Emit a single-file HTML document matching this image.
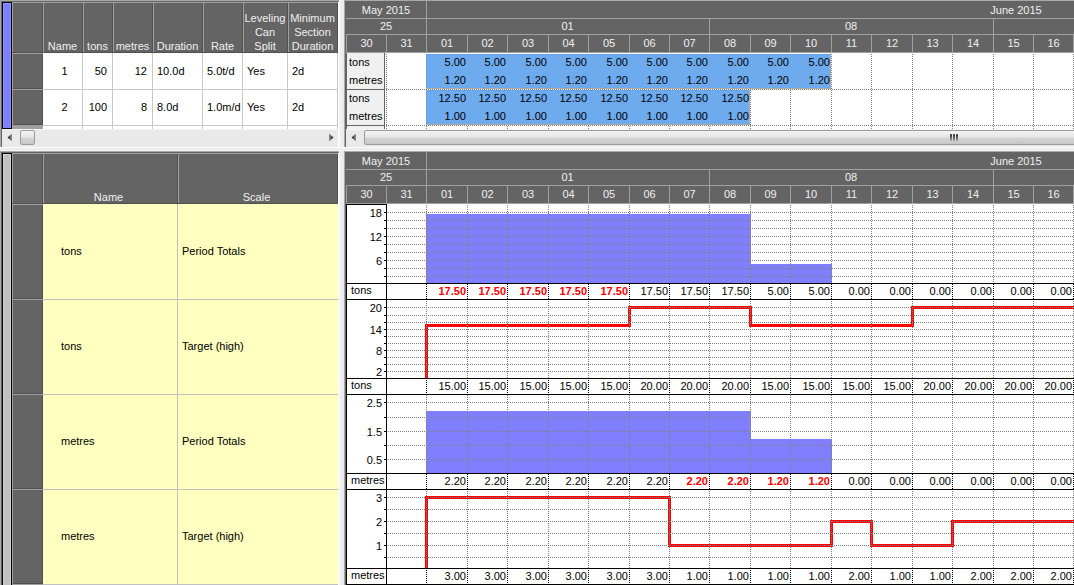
<!DOCTYPE html>
<html><head><meta charset="utf-8"><style>
html,body{margin:0;padding:0;width:1074px;height:585px;overflow:hidden;background:#f0f0f0}
body>div,body>svg{position:absolute}
.t{font-family:"Liberation Sans",sans-serif;font-size:11px;line-height:11px;white-space:nowrap}
</style></head><body>
<div style="left:0px;top:0px;width:1074px;height:585px;background:#f0f0f0;"></div>
<div style="left:0px;top:0px;width:338px;height:147px;background:#a9a9a9;"></div>
<div style="left:1px;top:1px;width:337px;height:146px;background:#646464;"></div>
<div style="left:2px;top:2px;width:336px;height:145px;background:#f0f0f0;"></div>
<div style="left:2px;top:2px;width:10px;height:127px;background:#000;"></div>
<div style="left:3px;top:3px;width:8px;height:125px;background:#8080ff;"></div>
<div style="left:3px;top:3px;width:1px;height:125px;background:#9090ff;"></div>
<div style="left:10px;top:3px;width:1px;height:125px;background:#9090ff;"></div>
<div style="left:3px;top:3px;width:8px;height:1px;background:#9090ff;"></div>
<div style="left:12px;top:2px;width:326px;height:51px;background:#646464;"></div>
<div style="left:12px;top:2px;width:326px;height:1px;background:#a0a0a0;"></div>
<div style="left:12px;top:2px;width:1px;height:127px;background:#a0a0a0;"></div>
<div style="left:42px;top:3px;width:1px;height:49px;background:#505050;"></div>
<div style="left:43px;top:3px;width:1px;height:49px;background:#a0a0a0;"></div>
<div style="left:82px;top:3px;width:1px;height:49px;background:#505050;"></div>
<div style="left:83px;top:3px;width:1px;height:49px;background:#a0a0a0;"></div>
<div style="left:112px;top:3px;width:1px;height:49px;background:#505050;"></div>
<div style="left:113px;top:3px;width:1px;height:49px;background:#a0a0a0;"></div>
<div style="left:152px;top:3px;width:1px;height:49px;background:#505050;"></div>
<div style="left:153px;top:3px;width:1px;height:49px;background:#a0a0a0;"></div>
<div style="left:202px;top:3px;width:1px;height:49px;background:#505050;"></div>
<div style="left:203px;top:3px;width:1px;height:49px;background:#a0a0a0;"></div>
<div style="left:242px;top:3px;width:1px;height:49px;background:#505050;"></div>
<div style="left:243px;top:3px;width:1px;height:49px;background:#a0a0a0;"></div>
<div style="left:287px;top:3px;width:1px;height:49px;background:#505050;"></div>
<div style="left:288px;top:3px;width:1px;height:49px;background:#a0a0a0;"></div>
<div style="left:337px;top:3px;width:1px;height:49px;background:#505050;"></div>
<div style="left:12px;top:52px;width:326px;height:1px;background:#505050;"></div>
<div style="left:13px;top:53px;width:30px;height:76px;background:#646464;"></div>
<div style="left:42px;top:54px;width:1px;height:35px;background:#505050;"></div>
<div style="left:13px;top:88px;width:29px;height:1px;background:#505050;"></div>
<div style="left:12px;top:53px;width:31px;height:1px;background:#a0a0a0;"></div>
<div style="left:12px;top:89px;width:31px;height:1px;background:#a0a0a0;"></div>
<div style="left:42px;top:90px;width:1px;height:35px;background:#505050;"></div>
<div style="left:13px;top:124px;width:29px;height:1px;background:#505050;"></div>
<div style="left:12px;top:89px;width:31px;height:1px;background:#a0a0a0;"></div>
<div style="left:12px;top:125px;width:31px;height:1px;background:#a0a0a0;"></div>
<div style="left:13px;top:126px;width:30px;height:3px;background:#a0a0a0;"></div>
<div style="left:43px;top:53px;width:295px;height:76px;background:#fff;"></div>
<div style="left:82px;top:53px;width:1px;height:76px;background:#c8c8c8;"></div>
<div style="left:112px;top:53px;width:1px;height:76px;background:#c8c8c8;"></div>
<div style="left:152px;top:53px;width:1px;height:76px;background:#c8c8c8;"></div>
<div style="left:202px;top:53px;width:1px;height:76px;background:#c8c8c8;"></div>
<div style="left:242px;top:53px;width:1px;height:76px;background:#c8c8c8;"></div>
<div style="left:287px;top:53px;width:1px;height:76px;background:#c8c8c8;"></div>
<div style="left:337px;top:53px;width:1px;height:76px;background:#c8c8c8;"></div>
<div style="left:43px;top:89px;width:295px;height:1px;background:#c8c8c8;"></div>
<div style="left:43px;top:125px;width:295px;height:1px;background:#c8c8c8;"></div>
<div class="t" style="left:-87.5px;width:300px;text-align:center;top:41px;color:#f0f0f0;">Name</div>
<div class="t" style="left:-52.5px;width:300px;text-align:center;top:41px;color:#f0f0f0;">tons</div>
<div class="t" style="left:-17.5px;width:300px;text-align:center;top:41px;color:#f0f0f0;">metres</div>
<div class="t" style="left:27.5px;width:300px;text-align:center;top:41px;color:#f0f0f0;">Duration</div>
<div class="t" style="left:72.5px;width:300px;text-align:center;top:41px;color:#f0f0f0;">Rate</div>
<div class="t" style="left:115.0px;width:300px;text-align:center;top:13px;color:#f0f0f0;">Leveling</div>
<div class="t" style="left:115.0px;width:300px;text-align:center;top:27px;color:#f0f0f0;">Can</div>
<div class="t" style="left:115.0px;width:300px;text-align:center;top:41px;color:#f0f0f0;">Split</div>
<div class="t" style="left:162.5px;width:300px;text-align:center;top:13px;color:#f0f0f0;">Minimum</div>
<div class="t" style="left:162.5px;width:300px;text-align:center;top:27px;color:#f0f0f0;">Section</div>
<div class="t" style="left:162.5px;width:300px;text-align:center;top:41px;color:#f0f0f0;">Duration</div>
<div class="t" style="left:-85.5px;width:300px;text-align:center;top:66px;color:#000;">1</div>
<div class="t" style="left:-193px;width:300px;text-align:right;top:66px;color:#000;">50</div>
<div class="t" style="left:-153px;width:300px;text-align:right;top:66px;color:#000;">12</div>
<div class="t" style="left:157px;top:66px;color:#000;">10.0d</div>
<div class="t" style="left:207px;top:66px;color:#000;">5.0t/d</div>
<div class="t" style="left:247px;top:66px;color:#000;">Yes</div>
<div class="t" style="left:292px;top:66px;color:#000;">2d</div>
<div class="t" style="left:-85.5px;width:300px;text-align:center;top:102px;color:#000;">2</div>
<div class="t" style="left:-193px;width:300px;text-align:right;top:102px;color:#000;">100</div>
<div class="t" style="left:-153px;width:300px;text-align:right;top:102px;color:#000;">8</div>
<div class="t" style="left:157px;top:102px;color:#000;">8.0d</div>
<div class="t" style="left:207px;top:102px;color:#000;">1.0m/d</div>
<div class="t" style="left:247px;top:102px;color:#000;">Yes</div>
<div class="t" style="left:292px;top:102px;color:#000;">2d</div>
<div style="left:2px;top:129px;width:336px;height:18px;background:#e9e9e9;"></div>
<div style="left:2px;top:129px;width:336px;height:1px;background:#f6f6f6;"></div>
<svg style="position:absolute;left:0;top:0" width="1074" height="585"><defs><linearGradient id="ga" x1="0" x2="1" y1="0" y2="0"><stop offset="0" stop-color="#111"/><stop offset="1" stop-color="#999"/></linearGradient><linearGradient id="gb" x1="1" x2="0" y1="0" y2="0"><stop offset="0" stop-color="#111"/><stop offset="1" stop-color="#999"/></linearGradient></defs><path d="M12 133.5 L12 141.5 L7.5 137.5 Z" fill="url(#ga)"/><path d="M329 133.5 L329 141.5 L333.5 137.5 Z" fill="url(#gb)"/></svg>
<div style="left:20px;top:130px;width:13px;height:13px;border:1px solid #9c9c9c;border-radius:2px;background:linear-gradient(to bottom,#f3f3f3 0,#e6e6e6 45%,#d6d6d6 55%,#c6c6ca 100%)"></div>
<div style="left:338px;top:0px;width:6px;height:585px;background:linear-gradient(to right,#fdfdfd 0 1px,#f6f6f6 1px 2px,#f0f0f0 2px 3px,#ececec 3px 6px);"></div>
<div style="left:0px;top:147px;width:1074px;height:4px;background:linear-gradient(to bottom,#fefefe 0 1px,#ededed 1px 3px,#f5f5f5 3px 4px);"></div>
<div style="left:338px;top:0px;width:1px;height:1px;background:#a9a9a9;"></div>
<div style="left:338px;top:1px;width:1px;height:1px;background:#8a8a8a;"></div>
<div style="left:338px;top:151px;width:1px;height:1px;background:#a9a9a9;"></div>
<div style="left:338px;top:152px;width:1px;height:1px;background:#8a8a8a;"></div>
<div style="left:344px;top:0px;width:730px;height:147px;background:#a9a9a9;"></div>
<div style="left:345px;top:1px;width:729px;height:146px;background:#646464;"></div>
<div style="left:345px;top:1px;width:729px;height:52px;background:#646464;"></div>
<div style="left:346px;top:18px;width:728px;height:1px;background:#a0a0a0;"></div>
<div style="left:426px;top:1px;width:1px;height:17px;background:#a0a0a0;"></div>
<div style="left:346px;top:34px;width:728px;height:1px;background:#a0a0a0;"></div>
<div style="left:426px;top:19px;width:1px;height:15px;background:#a0a0a0;"></div>
<div style="left:709px;top:19px;width:1px;height:15px;background:#a0a0a0;"></div>
<div style="left:993px;top:19px;width:1px;height:15px;background:#a0a0a0;"></div>
<div style="left:346px;top:35px;width:1px;height:17px;background:#a0a0a0;"></div>
<div style="left:386px;top:35px;width:1px;height:17px;background:#a0a0a0;"></div>
<div style="left:426px;top:35px;width:1px;height:17px;background:#a0a0a0;"></div>
<div style="left:467px;top:35px;width:1px;height:17px;background:#a0a0a0;"></div>
<div style="left:507px;top:35px;width:1px;height:17px;background:#a0a0a0;"></div>
<div style="left:548px;top:35px;width:1px;height:17px;background:#a0a0a0;"></div>
<div style="left:588px;top:35px;width:1px;height:17px;background:#a0a0a0;"></div>
<div style="left:629px;top:35px;width:1px;height:17px;background:#a0a0a0;"></div>
<div style="left:669px;top:35px;width:1px;height:17px;background:#a0a0a0;"></div>
<div style="left:709px;top:35px;width:1px;height:17px;background:#a0a0a0;"></div>
<div style="left:750px;top:35px;width:1px;height:17px;background:#a0a0a0;"></div>
<div style="left:790px;top:35px;width:1px;height:17px;background:#a0a0a0;"></div>
<div style="left:831px;top:35px;width:1px;height:17px;background:#a0a0a0;"></div>
<div style="left:871px;top:35px;width:1px;height:17px;background:#a0a0a0;"></div>
<div style="left:912px;top:35px;width:1px;height:17px;background:#a0a0a0;"></div>
<div style="left:952px;top:35px;width:1px;height:17px;background:#a0a0a0;"></div>
<div style="left:993px;top:35px;width:1px;height:17px;background:#a0a0a0;"></div>
<div style="left:1033px;top:35px;width:1px;height:17px;background:#a0a0a0;"></div>
<div style="left:1073px;top:35px;width:1px;height:17px;background:#a0a0a0;"></div>
<div style="left:346px;top:52px;width:728px;height:1px;background:#a0a0a0;"></div>
<div class="t" style="left:236px;width:300px;text-align:center;top:5px;color:#f0f0f0;">May 2015</div>
<div class="t" style="left:866px;width:300px;text-align:center;top:5px;color:#f0f0f0;">June 2015</div>
<div class="t" style="left:236px;width:300px;text-align:center;top:21px;color:#f0f0f0;">25</div>
<div class="t" style="left:417.5px;width:300px;text-align:center;top:21px;color:#f0f0f0;">01</div>
<div class="t" style="left:701px;width:300px;text-align:center;top:21px;color:#f0f0f0;">08</div>
<div class="t" style="left:216.5px;width:300px;text-align:center;top:38px;color:#f0f0f0;">30</div>
<div class="t" style="left:256.5px;width:300px;text-align:center;top:38px;color:#f0f0f0;">31</div>
<div class="t" style="left:297.0px;width:300px;text-align:center;top:38px;color:#f0f0f0;">01</div>
<div class="t" style="left:337.5px;width:300px;text-align:center;top:38px;color:#f0f0f0;">02</div>
<div class="t" style="left:378.0px;width:300px;text-align:center;top:38px;color:#f0f0f0;">03</div>
<div class="t" style="left:418.5px;width:300px;text-align:center;top:38px;color:#f0f0f0;">04</div>
<div class="t" style="left:459.0px;width:300px;text-align:center;top:38px;color:#f0f0f0;">05</div>
<div class="t" style="left:499.5px;width:300px;text-align:center;top:38px;color:#f0f0f0;">06</div>
<div class="t" style="left:539.5px;width:300px;text-align:center;top:38px;color:#f0f0f0;">07</div>
<div class="t" style="left:580.0px;width:300px;text-align:center;top:38px;color:#f0f0f0;">08</div>
<div class="t" style="left:620.5px;width:300px;text-align:center;top:38px;color:#f0f0f0;">09</div>
<div class="t" style="left:661.0px;width:300px;text-align:center;top:38px;color:#f0f0f0;">10</div>
<div class="t" style="left:701.5px;width:300px;text-align:center;top:38px;color:#f0f0f0;">11</div>
<div class="t" style="left:742.0px;width:300px;text-align:center;top:38px;color:#f0f0f0;">12</div>
<div class="t" style="left:782.5px;width:300px;text-align:center;top:38px;color:#f0f0f0;">13</div>
<div class="t" style="left:823.0px;width:300px;text-align:center;top:38px;color:#f0f0f0;">14</div>
<div class="t" style="left:863.5px;width:300px;text-align:center;top:38px;color:#f0f0f0;">15</div>
<div class="t" style="left:903.5px;width:300px;text-align:center;top:38px;color:#f0f0f0;">16</div>
<div style="left:346px;top:53px;width:1px;height:76px;background:#646464;"></div>
<div style="left:347px;top:53px;width:37px;height:76px;background:#f0f0f0;"></div>
<div style="left:384px;top:53px;width:1px;height:76px;background:#646464;"></div>
<div style="left:347px;top:89px;width:37px;height:1px;background:#646464;"></div>
<div style="left:347px;top:125px;width:37px;height:1px;background:#646464;"></div>
<div style="left:385px;top:53px;width:689px;height:76px;background:#fff;"></div>
<div style="left:426px;top:54px;width:405px;height:35px;background:#6eaaee;"></div>
<div style="left:426px;top:90px;width:324px;height:35px;background:#6eaaee;"></div>
<div style="left:426px;top:88px;width:405px;height:1px;background:#b0aaa0;"></div>
<div style="left:830px;top:54px;width:1px;height:35px;background:#b0aaa0;"></div>
<div style="left:426px;top:124px;width:324px;height:1px;background:#b0aaa0;"></div>
<div style="left:749px;top:90px;width:1px;height:35px;background:#b0aaa0;"></div>
<div style="left:426px;top:54px;width:404px;height:1px;background:#62a2ec;"></div>
<div style="left:426px;top:54px;width:1px;height:34px;background:#62a2ec;"></div>
<div style="left:426px;top:90px;width:323px;height:1px;background:#62a2ec;"></div>
<div style="left:426px;top:90px;width:1px;height:34px;background:#62a2ec;"></div>
<div style="left:386px;top:53px;width:1px;height:76px;background:linear-gradient(to bottom,transparent 0 1px,#808080 1px 2px);background-size:1px 2px"></div>
<div style="left:426px;top:125px;width:1px;height:4px;background:linear-gradient(to bottom,transparent 0 1px,#808080 1px 2px);background-size:1px 2px"></div>
<div style="left:467px;top:125px;width:1px;height:4px;background:linear-gradient(to bottom,transparent 0 1px,#808080 1px 2px);background-size:1px 2px"></div>
<div style="left:507px;top:125px;width:1px;height:4px;background:linear-gradient(to bottom,transparent 0 1px,#808080 1px 2px);background-size:1px 2px"></div>
<div style="left:548px;top:125px;width:1px;height:4px;background:linear-gradient(to bottom,transparent 0 1px,#808080 1px 2px);background-size:1px 2px"></div>
<div style="left:588px;top:125px;width:1px;height:4px;background:linear-gradient(to bottom,transparent 0 1px,#808080 1px 2px);background-size:1px 2px"></div>
<div style="left:629px;top:125px;width:1px;height:4px;background:linear-gradient(to bottom,transparent 0 1px,#808080 1px 2px);background-size:1px 2px"></div>
<div style="left:669px;top:125px;width:1px;height:4px;background:linear-gradient(to bottom,transparent 0 1px,#808080 1px 2px);background-size:1px 2px"></div>
<div style="left:709px;top:125px;width:1px;height:4px;background:linear-gradient(to bottom,transparent 0 1px,#808080 1px 2px);background-size:1px 2px"></div>
<div style="left:750px;top:125px;width:1px;height:4px;background:linear-gradient(to bottom,transparent 0 1px,#808080 1px 2px);background-size:1px 2px"></div>
<div style="left:750px;top:90px;width:1px;height:35px;background:linear-gradient(to bottom,#808080 0 1px,transparent 1px 2px);background-size:1px 2px"></div>
<div style="left:790px;top:125px;width:1px;height:4px;background:linear-gradient(to bottom,transparent 0 1px,#808080 1px 2px);background-size:1px 2px"></div>
<div style="left:790px;top:90px;width:1px;height:35px;background:linear-gradient(to bottom,#808080 0 1px,transparent 1px 2px);background-size:1px 2px"></div>
<div style="left:831px;top:53px;width:1px;height:76px;background:linear-gradient(to bottom,transparent 0 1px,#808080 1px 2px);background-size:1px 2px"></div>
<div style="left:871px;top:53px;width:1px;height:76px;background:linear-gradient(to bottom,transparent 0 1px,#808080 1px 2px);background-size:1px 2px"></div>
<div style="left:912px;top:53px;width:1px;height:76px;background:linear-gradient(to bottom,transparent 0 1px,#808080 1px 2px);background-size:1px 2px"></div>
<div style="left:952px;top:53px;width:1px;height:76px;background:linear-gradient(to bottom,transparent 0 1px,#808080 1px 2px);background-size:1px 2px"></div>
<div style="left:993px;top:53px;width:1px;height:76px;background:linear-gradient(to bottom,transparent 0 1px,#808080 1px 2px);background-size:1px 2px"></div>
<div style="left:1033px;top:53px;width:1px;height:76px;background:linear-gradient(to bottom,transparent 0 1px,#808080 1px 2px);background-size:1px 2px"></div>
<div style="left:1073px;top:53px;width:1px;height:76px;background:linear-gradient(to bottom,transparent 0 1px,#808080 1px 2px);background-size:1px 2px"></div>
<div style="left:386px;top:89px;width:688px;height:1px;background:linear-gradient(to right,#808080 0 1px,transparent 1px 2px);background-size:2px 1px"></div>
<div style="left:386px;top:125px;width:688px;height:1px;background:linear-gradient(to right,#808080 0 1px,transparent 1px 2px);background-size:2px 1px"></div>
<div class="t" style="left:349px;top:57px;color:#000;">tons</div>
<div class="t" style="left:349px;top:75px;color:#000;">metres</div>
<div class="t" style="left:349px;top:93px;color:#000;">tons</div>
<div class="t" style="left:349px;top:111px;color:#000;">metres</div>
<div class="t" style="left:166px;width:300px;text-align:right;top:57px;color:#000;">5.00</div>
<div class="t" style="left:166px;width:300px;text-align:right;top:75px;color:#000;">1.20</div>
<div class="t" style="left:206px;width:300px;text-align:right;top:57px;color:#000;">5.00</div>
<div class="t" style="left:206px;width:300px;text-align:right;top:75px;color:#000;">1.20</div>
<div class="t" style="left:247px;width:300px;text-align:right;top:57px;color:#000;">5.00</div>
<div class="t" style="left:247px;width:300px;text-align:right;top:75px;color:#000;">1.20</div>
<div class="t" style="left:287px;width:300px;text-align:right;top:57px;color:#000;">5.00</div>
<div class="t" style="left:287px;width:300px;text-align:right;top:75px;color:#000;">1.20</div>
<div class="t" style="left:328px;width:300px;text-align:right;top:57px;color:#000;">5.00</div>
<div class="t" style="left:328px;width:300px;text-align:right;top:75px;color:#000;">1.20</div>
<div class="t" style="left:368px;width:300px;text-align:right;top:57px;color:#000;">5.00</div>
<div class="t" style="left:368px;width:300px;text-align:right;top:75px;color:#000;">1.20</div>
<div class="t" style="left:408px;width:300px;text-align:right;top:57px;color:#000;">5.00</div>
<div class="t" style="left:408px;width:300px;text-align:right;top:75px;color:#000;">1.20</div>
<div class="t" style="left:449px;width:300px;text-align:right;top:57px;color:#000;">5.00</div>
<div class="t" style="left:449px;width:300px;text-align:right;top:75px;color:#000;">1.20</div>
<div class="t" style="left:489px;width:300px;text-align:right;top:57px;color:#000;">5.00</div>
<div class="t" style="left:489px;width:300px;text-align:right;top:75px;color:#000;">1.20</div>
<div class="t" style="left:530px;width:300px;text-align:right;top:57px;color:#000;">5.00</div>
<div class="t" style="left:530px;width:300px;text-align:right;top:75px;color:#000;">1.20</div>
<div class="t" style="left:166px;width:300px;text-align:right;top:93px;color:#000;">12.50</div>
<div class="t" style="left:166px;width:300px;text-align:right;top:111px;color:#000;">1.00</div>
<div class="t" style="left:206px;width:300px;text-align:right;top:93px;color:#000;">12.50</div>
<div class="t" style="left:206px;width:300px;text-align:right;top:111px;color:#000;">1.00</div>
<div class="t" style="left:247px;width:300px;text-align:right;top:93px;color:#000;">12.50</div>
<div class="t" style="left:247px;width:300px;text-align:right;top:111px;color:#000;">1.00</div>
<div class="t" style="left:287px;width:300px;text-align:right;top:93px;color:#000;">12.50</div>
<div class="t" style="left:287px;width:300px;text-align:right;top:111px;color:#000;">1.00</div>
<div class="t" style="left:328px;width:300px;text-align:right;top:93px;color:#000;">12.50</div>
<div class="t" style="left:328px;width:300px;text-align:right;top:111px;color:#000;">1.00</div>
<div class="t" style="left:368px;width:300px;text-align:right;top:93px;color:#000;">12.50</div>
<div class="t" style="left:368px;width:300px;text-align:right;top:111px;color:#000;">1.00</div>
<div class="t" style="left:408px;width:300px;text-align:right;top:93px;color:#000;">12.50</div>
<div class="t" style="left:408px;width:300px;text-align:right;top:111px;color:#000;">1.00</div>
<div class="t" style="left:449px;width:300px;text-align:right;top:93px;color:#000;">12.50</div>
<div class="t" style="left:449px;width:300px;text-align:right;top:111px;color:#000;">1.00</div>
<div style="left:346px;top:129px;width:728px;height:18px;background:#e9e9e9;"></div>
<div style="left:346px;top:129px;width:728px;height:1px;background:#f6f6f6;"></div>
<svg style="position:absolute;left:0;top:0" width="1074" height="585"><defs><linearGradient id="gc" x1="0" x2="1" y1="0" y2="0"><stop offset="0" stop-color="#111"/><stop offset="1" stop-color="#999"/></linearGradient></defs><path d="M356 133.5 L356 141.5 L351.5 137.5 Z" fill="url(#gc)"/></svg>
<div style="left:364px;top:130px;width:800px;height:13px;border:1px solid #9c9c9c;border-radius:2px;background:linear-gradient(to bottom,#f3f3f3 0,#e6e6e6 45%,#d6d6d6 55%,#c6c6ca 100%)"></div>
<div style="left:950px;top:134px;width:2px;height:7px;background:linear-gradient(to bottom,#222 0,#555 40%,#aaa 100%);border-radius:1px 1px 0 0"></div>
<div style="left:953px;top:134px;width:2px;height:7px;background:linear-gradient(to bottom,#222 0,#555 40%,#aaa 100%);border-radius:1px 1px 0 0"></div>
<div style="left:956px;top:134px;width:2px;height:7px;background:linear-gradient(to bottom,#222 0,#555 40%,#aaa 100%);border-radius:1px 1px 0 0"></div>
<div style="left:0px;top:151px;width:338px;height:434px;background:#a9a9a9;"></div>
<div style="left:1px;top:152px;width:337px;height:433px;background:#646464;"></div>
<div style="left:2px;top:153px;width:10px;height:432px;background:#000;"></div>
<div style="left:3px;top:154px;width:8px;height:431px;background:#c0c0c0;"></div>
<div style="left:3px;top:154px;width:1px;height:431px;background:#d0d0d0;"></div>
<div style="left:10px;top:154px;width:1px;height:431px;background:#d0d0d0;"></div>
<div style="left:3px;top:154px;width:8px;height:1px;background:#d0d0d0;"></div>
<div style="left:12px;top:153px;width:326px;height:51px;background:#646464;"></div>
<div style="left:12px;top:153px;width:326px;height:1px;background:#a0a0a0;"></div>
<div style="left:12px;top:153px;width:1px;height:432px;background:#a0a0a0;"></div>
<div style="left:42px;top:154px;width:1px;height:49px;background:#505050;"></div>
<div style="left:43px;top:154px;width:1px;height:49px;background:#a0a0a0;"></div>
<div style="left:177px;top:154px;width:1px;height:49px;background:#505050;"></div>
<div style="left:178px;top:154px;width:1px;height:49px;background:#a0a0a0;"></div>
<div style="left:337px;top:154px;width:1px;height:49px;background:#505050;"></div>
<div style="left:12px;top:203px;width:326px;height:1px;background:#505050;"></div>
<div class="t" style="left:-41.5px;width:300px;text-align:center;top:192px;color:#f0f0f0;">Name</div>
<div class="t" style="left:106.5px;width:300px;text-align:center;top:192px;color:#f0f0f0;">Scale</div>
<div style="left:13px;top:204px;width:30px;height:381px;background:#646464;"></div>
<div style="left:43px;top:204px;width:295px;height:381px;background:#ffffc0;"></div>
<div style="left:177px;top:204px;width:1px;height:381px;background:#c0c0c0;"></div>
<div style="left:12px;top:204px;width:31px;height:1px;background:#a0a0a0;"></div>
<div style="left:42px;top:205px;width:1px;height:94px;background:#505050;"></div>
<div style="left:13px;top:298px;width:29px;height:1px;background:#505050;"></div>
<div style="left:12px;top:299px;width:31px;height:1px;background:#a0a0a0;"></div>
<div style="left:43px;top:299px;width:295px;height:1px;background:#c0c0c0;"></div>
<div class="t" style="left:61px;top:246px;color:#000;">tons</div>
<div class="t" style="left:182px;top:246px;color:#000;">Period Totals</div>
<div style="left:12px;top:299px;width:31px;height:1px;background:#a0a0a0;"></div>
<div style="left:42px;top:300px;width:1px;height:94px;background:#505050;"></div>
<div style="left:13px;top:393px;width:29px;height:1px;background:#505050;"></div>
<div style="left:12px;top:394px;width:31px;height:1px;background:#a0a0a0;"></div>
<div style="left:43px;top:394px;width:295px;height:1px;background:#c0c0c0;"></div>
<div class="t" style="left:61px;top:341px;color:#000;">tons</div>
<div class="t" style="left:182px;top:341px;color:#000;">Target (high)</div>
<div style="left:12px;top:394px;width:31px;height:1px;background:#a0a0a0;"></div>
<div style="left:42px;top:395px;width:1px;height:94px;background:#505050;"></div>
<div style="left:13px;top:488px;width:29px;height:1px;background:#505050;"></div>
<div style="left:12px;top:489px;width:31px;height:1px;background:#a0a0a0;"></div>
<div style="left:43px;top:489px;width:295px;height:1px;background:#c0c0c0;"></div>
<div class="t" style="left:61px;top:436px;color:#000;">metres</div>
<div class="t" style="left:182px;top:436px;color:#000;">Period Totals</div>
<div style="left:12px;top:489px;width:31px;height:1px;background:#a0a0a0;"></div>
<div style="left:42px;top:490px;width:1px;height:94px;background:#505050;"></div>
<div style="left:13px;top:583px;width:29px;height:1px;background:#505050;"></div>
<div style="left:12px;top:584px;width:31px;height:1px;background:#a0a0a0;"></div>
<div style="left:43px;top:584px;width:295px;height:1px;background:#c0c0c0;"></div>
<div class="t" style="left:61px;top:531px;color:#000;">metres</div>
<div class="t" style="left:182px;top:531px;color:#000;">Target (high)</div>
<div style="left:344px;top:151px;width:730px;height:434px;background:#a9a9a9;"></div>
<div style="left:345px;top:152px;width:729px;height:433px;background:#646464;"></div>
<div style="left:345px;top:152px;width:729px;height:52px;background:#646464;"></div>
<div style="left:346px;top:169px;width:728px;height:1px;background:#a0a0a0;"></div>
<div style="left:426px;top:152px;width:1px;height:17px;background:#a0a0a0;"></div>
<div style="left:346px;top:185px;width:728px;height:1px;background:#a0a0a0;"></div>
<div style="left:426px;top:170px;width:1px;height:15px;background:#a0a0a0;"></div>
<div style="left:709px;top:170px;width:1px;height:15px;background:#a0a0a0;"></div>
<div style="left:993px;top:170px;width:1px;height:15px;background:#a0a0a0;"></div>
<div style="left:346px;top:186px;width:1px;height:17px;background:#a0a0a0;"></div>
<div style="left:386px;top:186px;width:1px;height:17px;background:#a0a0a0;"></div>
<div style="left:426px;top:186px;width:1px;height:17px;background:#a0a0a0;"></div>
<div style="left:467px;top:186px;width:1px;height:17px;background:#a0a0a0;"></div>
<div style="left:507px;top:186px;width:1px;height:17px;background:#a0a0a0;"></div>
<div style="left:548px;top:186px;width:1px;height:17px;background:#a0a0a0;"></div>
<div style="left:588px;top:186px;width:1px;height:17px;background:#a0a0a0;"></div>
<div style="left:629px;top:186px;width:1px;height:17px;background:#a0a0a0;"></div>
<div style="left:669px;top:186px;width:1px;height:17px;background:#a0a0a0;"></div>
<div style="left:709px;top:186px;width:1px;height:17px;background:#a0a0a0;"></div>
<div style="left:750px;top:186px;width:1px;height:17px;background:#a0a0a0;"></div>
<div style="left:790px;top:186px;width:1px;height:17px;background:#a0a0a0;"></div>
<div style="left:831px;top:186px;width:1px;height:17px;background:#a0a0a0;"></div>
<div style="left:871px;top:186px;width:1px;height:17px;background:#a0a0a0;"></div>
<div style="left:912px;top:186px;width:1px;height:17px;background:#a0a0a0;"></div>
<div style="left:952px;top:186px;width:1px;height:17px;background:#a0a0a0;"></div>
<div style="left:993px;top:186px;width:1px;height:17px;background:#a0a0a0;"></div>
<div style="left:1033px;top:186px;width:1px;height:17px;background:#a0a0a0;"></div>
<div style="left:1073px;top:186px;width:1px;height:17px;background:#a0a0a0;"></div>
<div style="left:346px;top:203px;width:728px;height:1px;background:#a0a0a0;"></div>
<div class="t" style="left:236px;width:300px;text-align:center;top:156px;color:#f0f0f0;">May 2015</div>
<div class="t" style="left:866px;width:300px;text-align:center;top:156px;color:#f0f0f0;">June 2015</div>
<div class="t" style="left:236px;width:300px;text-align:center;top:172px;color:#f0f0f0;">25</div>
<div class="t" style="left:417.5px;width:300px;text-align:center;top:172px;color:#f0f0f0;">01</div>
<div class="t" style="left:701px;width:300px;text-align:center;top:172px;color:#f0f0f0;">08</div>
<div class="t" style="left:216.5px;width:300px;text-align:center;top:189px;color:#f0f0f0;">30</div>
<div class="t" style="left:256.5px;width:300px;text-align:center;top:189px;color:#f0f0f0;">31</div>
<div class="t" style="left:297.0px;width:300px;text-align:center;top:189px;color:#f0f0f0;">01</div>
<div class="t" style="left:337.5px;width:300px;text-align:center;top:189px;color:#f0f0f0;">02</div>
<div class="t" style="left:378.0px;width:300px;text-align:center;top:189px;color:#f0f0f0;">03</div>
<div class="t" style="left:418.5px;width:300px;text-align:center;top:189px;color:#f0f0f0;">04</div>
<div class="t" style="left:459.0px;width:300px;text-align:center;top:189px;color:#f0f0f0;">05</div>
<div class="t" style="left:499.5px;width:300px;text-align:center;top:189px;color:#f0f0f0;">06</div>
<div class="t" style="left:539.5px;width:300px;text-align:center;top:189px;color:#f0f0f0;">07</div>
<div class="t" style="left:580.0px;width:300px;text-align:center;top:189px;color:#f0f0f0;">08</div>
<div class="t" style="left:620.5px;width:300px;text-align:center;top:189px;color:#f0f0f0;">09</div>
<div class="t" style="left:661.0px;width:300px;text-align:center;top:189px;color:#f0f0f0;">10</div>
<div class="t" style="left:701.5px;width:300px;text-align:center;top:189px;color:#f0f0f0;">11</div>
<div class="t" style="left:742.0px;width:300px;text-align:center;top:189px;color:#f0f0f0;">12</div>
<div class="t" style="left:782.5px;width:300px;text-align:center;top:189px;color:#f0f0f0;">13</div>
<div class="t" style="left:823.0px;width:300px;text-align:center;top:189px;color:#f0f0f0;">14</div>
<div class="t" style="left:863.5px;width:300px;text-align:center;top:189px;color:#f0f0f0;">15</div>
<div class="t" style="left:903.5px;width:300px;text-align:center;top:189px;color:#f0f0f0;">16</div>
<div style="left:346px;top:204px;width:728px;height:381px;background:#fff;"></div>
<div style="left:426px;top:214px;width:325px;height:69px;background:#7f7fff;"></div>
<div style="left:750px;top:264px;width:82px;height:19px;background:#7f7fff;"></div>
<div style="left:387px;top:212px;width:687px;height:1px;background:linear-gradient(to right,transparent 0 1px,#808080 1px 2px);background-size:2px 1px"></div>
<div style="left:384px;top:212px;width:2px;height:1px;background:#000;"></div>
<div style="left:387px;top:220px;width:687px;height:1px;background:linear-gradient(to right,transparent 0 1px,#808080 1px 2px);background-size:2px 1px"></div>
<div style="left:384px;top:220px;width:2px;height:1px;background:#000;"></div>
<div style="left:387px;top:228px;width:687px;height:1px;background:linear-gradient(to right,transparent 0 1px,#808080 1px 2px);background-size:2px 1px"></div>
<div style="left:384px;top:228px;width:2px;height:1px;background:#000;"></div>
<div style="left:387px;top:236px;width:687px;height:1px;background:linear-gradient(to right,transparent 0 1px,#808080 1px 2px);background-size:2px 1px"></div>
<div style="left:384px;top:236px;width:2px;height:1px;background:#000;"></div>
<div style="left:387px;top:244px;width:687px;height:1px;background:linear-gradient(to right,transparent 0 1px,#808080 1px 2px);background-size:2px 1px"></div>
<div style="left:384px;top:244px;width:2px;height:1px;background:#000;"></div>
<div style="left:387px;top:252px;width:687px;height:1px;background:linear-gradient(to right,transparent 0 1px,#808080 1px 2px);background-size:2px 1px"></div>
<div style="left:384px;top:252px;width:2px;height:1px;background:#000;"></div>
<div style="left:387px;top:260px;width:687px;height:1px;background:linear-gradient(to right,transparent 0 1px,#808080 1px 2px);background-size:2px 1px"></div>
<div style="left:384px;top:260px;width:2px;height:1px;background:#000;"></div>
<div style="left:387px;top:268px;width:687px;height:1px;background:linear-gradient(to right,transparent 0 1px,#808080 1px 2px);background-size:2px 1px"></div>
<div style="left:384px;top:268px;width:2px;height:1px;background:#000;"></div>
<div style="left:387px;top:276px;width:687px;height:1px;background:linear-gradient(to right,transparent 0 1px,#808080 1px 2px);background-size:2px 1px"></div>
<div style="left:384px;top:276px;width:2px;height:1px;background:#000;"></div>
<div style="left:426px;top:205px;width:1px;height:78px;background:linear-gradient(to bottom,#808080 0 1px,transparent 1px 2px);background-size:1px 2px"></div>
<div style="left:467px;top:205px;width:1px;height:78px;background:linear-gradient(to bottom,#808080 0 1px,transparent 1px 2px);background-size:1px 2px"></div>
<div style="left:507px;top:205px;width:1px;height:78px;background:linear-gradient(to bottom,#808080 0 1px,transparent 1px 2px);background-size:1px 2px"></div>
<div style="left:548px;top:205px;width:1px;height:78px;background:linear-gradient(to bottom,#808080 0 1px,transparent 1px 2px);background-size:1px 2px"></div>
<div style="left:588px;top:205px;width:1px;height:78px;background:linear-gradient(to bottom,#808080 0 1px,transparent 1px 2px);background-size:1px 2px"></div>
<div style="left:629px;top:205px;width:1px;height:78px;background:linear-gradient(to bottom,#808080 0 1px,transparent 1px 2px);background-size:1px 2px"></div>
<div style="left:669px;top:205px;width:1px;height:78px;background:linear-gradient(to bottom,#808080 0 1px,transparent 1px 2px);background-size:1px 2px"></div>
<div style="left:709px;top:205px;width:1px;height:78px;background:linear-gradient(to bottom,#808080 0 1px,transparent 1px 2px);background-size:1px 2px"></div>
<div style="left:750px;top:205px;width:1px;height:78px;background:linear-gradient(to bottom,#808080 0 1px,transparent 1px 2px);background-size:1px 2px"></div>
<div style="left:790px;top:205px;width:1px;height:78px;background:linear-gradient(to bottom,#808080 0 1px,transparent 1px 2px);background-size:1px 2px"></div>
<div style="left:831px;top:205px;width:1px;height:78px;background:linear-gradient(to bottom,#808080 0 1px,transparent 1px 2px);background-size:1px 2px"></div>
<div style="left:871px;top:205px;width:1px;height:78px;background:linear-gradient(to bottom,#808080 0 1px,transparent 1px 2px);background-size:1px 2px"></div>
<div style="left:912px;top:205px;width:1px;height:78px;background:linear-gradient(to bottom,#808080 0 1px,transparent 1px 2px);background-size:1px 2px"></div>
<div style="left:952px;top:205px;width:1px;height:78px;background:linear-gradient(to bottom,#808080 0 1px,transparent 1px 2px);background-size:1px 2px"></div>
<div style="left:993px;top:205px;width:1px;height:78px;background:linear-gradient(to bottom,#808080 0 1px,transparent 1px 2px);background-size:1px 2px"></div>
<div style="left:1033px;top:205px;width:1px;height:78px;background:linear-gradient(to bottom,#808080 0 1px,transparent 1px 2px);background-size:1px 2px"></div>
<div style="left:1073px;top:205px;width:1px;height:78px;background:linear-gradient(to bottom,#808080 0 1px,transparent 1px 2px);background-size:1px 2px"></div>
<div class="t" style="left:82px;width:300px;text-align:right;top:208px;color:#000;">18</div>
<div class="t" style="left:82px;width:300px;text-align:right;top:232px;color:#000;">12</div>
<div class="t" style="left:82px;width:300px;text-align:right;top:256px;color:#000;">6</div>
<div style="left:346px;top:204px;width:41px;height:1px;background:#000;"></div>
<div style="left:346px;top:283px;width:728px;height:1px;background:#000;"></div>
<div style="left:346px;top:299px;width:728px;height:1px;background:#000;"></div>
<div style="left:346px;top:204px;width:1px;height:96px;background:#000;"></div>
<div style="left:386px;top:204px;width:1px;height:96px;background:#000;"></div>
<div style="left:426px;top:284px;width:1px;height:15px;background:linear-gradient(to bottom,#000 0 1px,transparent 1px 2px);background-size:1px 2px"></div>
<div style="left:467px;top:284px;width:1px;height:15px;background:linear-gradient(to bottom,#000 0 1px,transparent 1px 2px);background-size:1px 2px"></div>
<div style="left:507px;top:284px;width:1px;height:15px;background:linear-gradient(to bottom,#000 0 1px,transparent 1px 2px);background-size:1px 2px"></div>
<div style="left:548px;top:284px;width:1px;height:15px;background:linear-gradient(to bottom,#000 0 1px,transparent 1px 2px);background-size:1px 2px"></div>
<div style="left:588px;top:284px;width:1px;height:15px;background:linear-gradient(to bottom,#000 0 1px,transparent 1px 2px);background-size:1px 2px"></div>
<div style="left:629px;top:284px;width:1px;height:15px;background:linear-gradient(to bottom,#000 0 1px,transparent 1px 2px);background-size:1px 2px"></div>
<div style="left:669px;top:284px;width:1px;height:15px;background:linear-gradient(to bottom,#000 0 1px,transparent 1px 2px);background-size:1px 2px"></div>
<div style="left:709px;top:284px;width:1px;height:15px;background:linear-gradient(to bottom,#000 0 1px,transparent 1px 2px);background-size:1px 2px"></div>
<div style="left:750px;top:284px;width:1px;height:15px;background:linear-gradient(to bottom,#000 0 1px,transparent 1px 2px);background-size:1px 2px"></div>
<div style="left:790px;top:284px;width:1px;height:15px;background:linear-gradient(to bottom,#000 0 1px,transparent 1px 2px);background-size:1px 2px"></div>
<div style="left:831px;top:284px;width:1px;height:15px;background:linear-gradient(to bottom,#000 0 1px,transparent 1px 2px);background-size:1px 2px"></div>
<div style="left:871px;top:284px;width:1px;height:15px;background:linear-gradient(to bottom,#000 0 1px,transparent 1px 2px);background-size:1px 2px"></div>
<div style="left:912px;top:284px;width:1px;height:15px;background:linear-gradient(to bottom,#000 0 1px,transparent 1px 2px);background-size:1px 2px"></div>
<div style="left:952px;top:284px;width:1px;height:15px;background:linear-gradient(to bottom,#000 0 1px,transparent 1px 2px);background-size:1px 2px"></div>
<div style="left:993px;top:284px;width:1px;height:15px;background:linear-gradient(to bottom,#000 0 1px,transparent 1px 2px);background-size:1px 2px"></div>
<div style="left:1033px;top:284px;width:1px;height:15px;background:linear-gradient(to bottom,#000 0 1px,transparent 1px 2px);background-size:1px 2px"></div>
<div style="left:1073px;top:284px;width:1px;height:15px;background:linear-gradient(to bottom,#000 0 1px,transparent 1px 2px);background-size:1px 2px"></div>
<div class="t" style="left:351px;top:285px;color:#000;">tons</div>
<div class="t" style="left:166px;width:300px;text-align:right;top:286px;color:#ff0000;font-weight:bold;">17.50</div>
<div class="t" style="left:206px;width:300px;text-align:right;top:286px;color:#ff0000;font-weight:bold;">17.50</div>
<div class="t" style="left:247px;width:300px;text-align:right;top:286px;color:#ff0000;font-weight:bold;">17.50</div>
<div class="t" style="left:287px;width:300px;text-align:right;top:286px;color:#ff0000;font-weight:bold;">17.50</div>
<div class="t" style="left:328px;width:300px;text-align:right;top:286px;color:#ff0000;font-weight:bold;">17.50</div>
<div class="t" style="left:368px;width:300px;text-align:right;top:286px;color:#000;">17.50</div>
<div class="t" style="left:408px;width:300px;text-align:right;top:286px;color:#000;">17.50</div>
<div class="t" style="left:449px;width:300px;text-align:right;top:286px;color:#000;">17.50</div>
<div class="t" style="left:489px;width:300px;text-align:right;top:286px;color:#000;">5.00</div>
<div class="t" style="left:530px;width:300px;text-align:right;top:286px;color:#000;">5.00</div>
<div class="t" style="left:570px;width:300px;text-align:right;top:286px;color:#000;">0.00</div>
<div class="t" style="left:611px;width:300px;text-align:right;top:286px;color:#000;">0.00</div>
<div class="t" style="left:651px;width:300px;text-align:right;top:286px;color:#000;">0.00</div>
<div class="t" style="left:692px;width:300px;text-align:right;top:286px;color:#000;">0.00</div>
<div class="t" style="left:732px;width:300px;text-align:right;top:286px;color:#000;">0.00</div>
<div class="t" style="left:772px;width:300px;text-align:right;top:286px;color:#000;">0.00</div>
<div style="left:425px;top:324px;width:206px;height:3px;background:#ff0000;"></div>
<div style="left:425px;top:324px;width:3px;height:54px;background:#ff0000;"></div>
<div style="left:628px;top:306px;width:124px;height:3px;background:#ff0000;"></div>
<div style="left:628px;top:306px;width:3px;height:21px;background:#ff0000;"></div>
<div style="left:749px;top:324px;width:165px;height:3px;background:#ff0000;"></div>
<div style="left:749px;top:306px;width:3px;height:21px;background:#ff0000;"></div>
<div style="left:911px;top:306px;width:163px;height:3px;background:#ff0000;"></div>
<div style="left:911px;top:306px;width:3px;height:21px;background:#ff0000;"></div>
<div style="left:387px;top:307px;width:687px;height:1px;background:linear-gradient(to right,transparent 0 1px,#808080 1px 2px);background-size:2px 1px"></div>
<div style="left:384px;top:307px;width:2px;height:1px;background:#000;"></div>
<div style="left:387px;top:315px;width:687px;height:1px;background:linear-gradient(to right,transparent 0 1px,#808080 1px 2px);background-size:2px 1px"></div>
<div style="left:384px;top:315px;width:2px;height:1px;background:#000;"></div>
<div style="left:387px;top:322px;width:687px;height:1px;background:linear-gradient(to right,transparent 0 1px,#808080 1px 2px);background-size:2px 1px"></div>
<div style="left:384px;top:322px;width:2px;height:1px;background:#000;"></div>
<div style="left:387px;top:329px;width:687px;height:1px;background:linear-gradient(to right,transparent 0 1px,#808080 1px 2px);background-size:2px 1px"></div>
<div style="left:384px;top:329px;width:2px;height:1px;background:#000;"></div>
<div style="left:387px;top:336px;width:687px;height:1px;background:linear-gradient(to right,transparent 0 1px,#808080 1px 2px);background-size:2px 1px"></div>
<div style="left:384px;top:336px;width:2px;height:1px;background:#000;"></div>
<div style="left:387px;top:343px;width:687px;height:1px;background:linear-gradient(to right,transparent 0 1px,#808080 1px 2px);background-size:2px 1px"></div>
<div style="left:384px;top:343px;width:2px;height:1px;background:#000;"></div>
<div style="left:387px;top:350px;width:687px;height:1px;background:linear-gradient(to right,transparent 0 1px,#808080 1px 2px);background-size:2px 1px"></div>
<div style="left:384px;top:350px;width:2px;height:1px;background:#000;"></div>
<div style="left:387px;top:357px;width:687px;height:1px;background:linear-gradient(to right,transparent 0 1px,#808080 1px 2px);background-size:2px 1px"></div>
<div style="left:384px;top:357px;width:2px;height:1px;background:#000;"></div>
<div style="left:387px;top:364px;width:687px;height:1px;background:linear-gradient(to right,transparent 0 1px,#808080 1px 2px);background-size:2px 1px"></div>
<div style="left:384px;top:364px;width:2px;height:1px;background:#000;"></div>
<div style="left:387px;top:371px;width:687px;height:1px;background:linear-gradient(to right,transparent 0 1px,#808080 1px 2px);background-size:2px 1px"></div>
<div style="left:384px;top:371px;width:2px;height:1px;background:#000;"></div>
<div style="left:426px;top:300px;width:1px;height:78px;background:linear-gradient(to bottom,transparent 0 1px,#808080 1px 2px);background-size:1px 2px"></div>
<div style="left:467px;top:300px;width:1px;height:78px;background:linear-gradient(to bottom,transparent 0 1px,#808080 1px 2px);background-size:1px 2px"></div>
<div style="left:507px;top:300px;width:1px;height:78px;background:linear-gradient(to bottom,transparent 0 1px,#808080 1px 2px);background-size:1px 2px"></div>
<div style="left:548px;top:300px;width:1px;height:78px;background:linear-gradient(to bottom,transparent 0 1px,#808080 1px 2px);background-size:1px 2px"></div>
<div style="left:588px;top:300px;width:1px;height:78px;background:linear-gradient(to bottom,transparent 0 1px,#808080 1px 2px);background-size:1px 2px"></div>
<div style="left:629px;top:300px;width:1px;height:78px;background:linear-gradient(to bottom,transparent 0 1px,#808080 1px 2px);background-size:1px 2px"></div>
<div style="left:669px;top:300px;width:1px;height:78px;background:linear-gradient(to bottom,transparent 0 1px,#808080 1px 2px);background-size:1px 2px"></div>
<div style="left:709px;top:300px;width:1px;height:78px;background:linear-gradient(to bottom,transparent 0 1px,#808080 1px 2px);background-size:1px 2px"></div>
<div style="left:750px;top:300px;width:1px;height:78px;background:linear-gradient(to bottom,transparent 0 1px,#808080 1px 2px);background-size:1px 2px"></div>
<div style="left:790px;top:300px;width:1px;height:78px;background:linear-gradient(to bottom,transparent 0 1px,#808080 1px 2px);background-size:1px 2px"></div>
<div style="left:831px;top:300px;width:1px;height:78px;background:linear-gradient(to bottom,transparent 0 1px,#808080 1px 2px);background-size:1px 2px"></div>
<div style="left:871px;top:300px;width:1px;height:78px;background:linear-gradient(to bottom,transparent 0 1px,#808080 1px 2px);background-size:1px 2px"></div>
<div style="left:912px;top:300px;width:1px;height:78px;background:linear-gradient(to bottom,transparent 0 1px,#808080 1px 2px);background-size:1px 2px"></div>
<div style="left:952px;top:300px;width:1px;height:78px;background:linear-gradient(to bottom,transparent 0 1px,#808080 1px 2px);background-size:1px 2px"></div>
<div style="left:993px;top:300px;width:1px;height:78px;background:linear-gradient(to bottom,transparent 0 1px,#808080 1px 2px);background-size:1px 2px"></div>
<div style="left:1033px;top:300px;width:1px;height:78px;background:linear-gradient(to bottom,transparent 0 1px,#808080 1px 2px);background-size:1px 2px"></div>
<div style="left:1073px;top:300px;width:1px;height:78px;background:linear-gradient(to bottom,transparent 0 1px,#808080 1px 2px);background-size:1px 2px"></div>
<div class="t" style="left:82px;width:300px;text-align:right;top:303px;color:#000;">20</div>
<div class="t" style="left:82px;width:300px;text-align:right;top:325px;color:#000;">14</div>
<div class="t" style="left:82px;width:300px;text-align:right;top:346px;color:#000;">8</div>
<div class="t" style="left:82px;width:300px;text-align:right;top:367px;color:#000;">2</div>
<div style="left:346px;top:299px;width:728px;height:1px;background:#000;"></div>
<div style="left:346px;top:378px;width:728px;height:1px;background:#000;"></div>
<div style="left:346px;top:394px;width:728px;height:1px;background:#000;"></div>
<div style="left:346px;top:299px;width:1px;height:96px;background:#000;"></div>
<div style="left:386px;top:299px;width:1px;height:96px;background:#000;"></div>
<div style="left:426px;top:379px;width:1px;height:15px;background:linear-gradient(to bottom,transparent 0 1px,#000 1px 2px);background-size:1px 2px"></div>
<div style="left:467px;top:379px;width:1px;height:15px;background:linear-gradient(to bottom,transparent 0 1px,#000 1px 2px);background-size:1px 2px"></div>
<div style="left:507px;top:379px;width:1px;height:15px;background:linear-gradient(to bottom,transparent 0 1px,#000 1px 2px);background-size:1px 2px"></div>
<div style="left:548px;top:379px;width:1px;height:15px;background:linear-gradient(to bottom,transparent 0 1px,#000 1px 2px);background-size:1px 2px"></div>
<div style="left:588px;top:379px;width:1px;height:15px;background:linear-gradient(to bottom,transparent 0 1px,#000 1px 2px);background-size:1px 2px"></div>
<div style="left:629px;top:379px;width:1px;height:15px;background:linear-gradient(to bottom,transparent 0 1px,#000 1px 2px);background-size:1px 2px"></div>
<div style="left:669px;top:379px;width:1px;height:15px;background:linear-gradient(to bottom,transparent 0 1px,#000 1px 2px);background-size:1px 2px"></div>
<div style="left:709px;top:379px;width:1px;height:15px;background:linear-gradient(to bottom,transparent 0 1px,#000 1px 2px);background-size:1px 2px"></div>
<div style="left:750px;top:379px;width:1px;height:15px;background:linear-gradient(to bottom,transparent 0 1px,#000 1px 2px);background-size:1px 2px"></div>
<div style="left:790px;top:379px;width:1px;height:15px;background:linear-gradient(to bottom,transparent 0 1px,#000 1px 2px);background-size:1px 2px"></div>
<div style="left:831px;top:379px;width:1px;height:15px;background:linear-gradient(to bottom,transparent 0 1px,#000 1px 2px);background-size:1px 2px"></div>
<div style="left:871px;top:379px;width:1px;height:15px;background:linear-gradient(to bottom,transparent 0 1px,#000 1px 2px);background-size:1px 2px"></div>
<div style="left:912px;top:379px;width:1px;height:15px;background:linear-gradient(to bottom,transparent 0 1px,#000 1px 2px);background-size:1px 2px"></div>
<div style="left:952px;top:379px;width:1px;height:15px;background:linear-gradient(to bottom,transparent 0 1px,#000 1px 2px);background-size:1px 2px"></div>
<div style="left:993px;top:379px;width:1px;height:15px;background:linear-gradient(to bottom,transparent 0 1px,#000 1px 2px);background-size:1px 2px"></div>
<div style="left:1033px;top:379px;width:1px;height:15px;background:linear-gradient(to bottom,transparent 0 1px,#000 1px 2px);background-size:1px 2px"></div>
<div style="left:1073px;top:379px;width:1px;height:15px;background:linear-gradient(to bottom,transparent 0 1px,#000 1px 2px);background-size:1px 2px"></div>
<div class="t" style="left:351px;top:380px;color:#000;">tons</div>
<div class="t" style="left:166px;width:300px;text-align:right;top:381px;color:#000;">15.00</div>
<div class="t" style="left:206px;width:300px;text-align:right;top:381px;color:#000;">15.00</div>
<div class="t" style="left:247px;width:300px;text-align:right;top:381px;color:#000;">15.00</div>
<div class="t" style="left:287px;width:300px;text-align:right;top:381px;color:#000;">15.00</div>
<div class="t" style="left:328px;width:300px;text-align:right;top:381px;color:#000;">15.00</div>
<div class="t" style="left:368px;width:300px;text-align:right;top:381px;color:#000;">20.00</div>
<div class="t" style="left:408px;width:300px;text-align:right;top:381px;color:#000;">20.00</div>
<div class="t" style="left:449px;width:300px;text-align:right;top:381px;color:#000;">20.00</div>
<div class="t" style="left:489px;width:300px;text-align:right;top:381px;color:#000;">15.00</div>
<div class="t" style="left:530px;width:300px;text-align:right;top:381px;color:#000;">15.00</div>
<div class="t" style="left:570px;width:300px;text-align:right;top:381px;color:#000;">15.00</div>
<div class="t" style="left:611px;width:300px;text-align:right;top:381px;color:#000;">15.00</div>
<div class="t" style="left:651px;width:300px;text-align:right;top:381px;color:#000;">20.00</div>
<div class="t" style="left:692px;width:300px;text-align:right;top:381px;color:#000;">20.00</div>
<div class="t" style="left:732px;width:300px;text-align:right;top:381px;color:#000;">20.00</div>
<div class="t" style="left:772px;width:300px;text-align:right;top:381px;color:#000;">20.00</div>
<div style="left:426px;top:411px;width:325px;height:62px;background:#7f7fff;"></div>
<div style="left:750px;top:439px;width:82px;height:34px;background:#7f7fff;"></div>
<div style="left:387px;top:402px;width:687px;height:1px;background:linear-gradient(to right,transparent 0 1px,#808080 1px 2px);background-size:2px 1px"></div>
<div style="left:384px;top:402px;width:2px;height:1px;background:#000;"></div>
<div style="left:387px;top:417px;width:687px;height:1px;background:linear-gradient(to right,transparent 0 1px,#808080 1px 2px);background-size:2px 1px"></div>
<div style="left:384px;top:417px;width:2px;height:1px;background:#000;"></div>
<div style="left:387px;top:431px;width:687px;height:1px;background:linear-gradient(to right,transparent 0 1px,#808080 1px 2px);background-size:2px 1px"></div>
<div style="left:384px;top:431px;width:2px;height:1px;background:#000;"></div>
<div style="left:387px;top:445px;width:687px;height:1px;background:linear-gradient(to right,transparent 0 1px,#808080 1px 2px);background-size:2px 1px"></div>
<div style="left:384px;top:445px;width:2px;height:1px;background:#000;"></div>
<div style="left:387px;top:459px;width:687px;height:1px;background:linear-gradient(to right,transparent 0 1px,#808080 1px 2px);background-size:2px 1px"></div>
<div style="left:384px;top:459px;width:2px;height:1px;background:#000;"></div>
<div style="left:426px;top:395px;width:1px;height:78px;background:linear-gradient(to bottom,#808080 0 1px,transparent 1px 2px);background-size:1px 2px"></div>
<div style="left:467px;top:395px;width:1px;height:78px;background:linear-gradient(to bottom,#808080 0 1px,transparent 1px 2px);background-size:1px 2px"></div>
<div style="left:507px;top:395px;width:1px;height:78px;background:linear-gradient(to bottom,#808080 0 1px,transparent 1px 2px);background-size:1px 2px"></div>
<div style="left:548px;top:395px;width:1px;height:78px;background:linear-gradient(to bottom,#808080 0 1px,transparent 1px 2px);background-size:1px 2px"></div>
<div style="left:588px;top:395px;width:1px;height:78px;background:linear-gradient(to bottom,#808080 0 1px,transparent 1px 2px);background-size:1px 2px"></div>
<div style="left:629px;top:395px;width:1px;height:78px;background:linear-gradient(to bottom,#808080 0 1px,transparent 1px 2px);background-size:1px 2px"></div>
<div style="left:669px;top:395px;width:1px;height:78px;background:linear-gradient(to bottom,#808080 0 1px,transparent 1px 2px);background-size:1px 2px"></div>
<div style="left:709px;top:395px;width:1px;height:78px;background:linear-gradient(to bottom,#808080 0 1px,transparent 1px 2px);background-size:1px 2px"></div>
<div style="left:750px;top:395px;width:1px;height:78px;background:linear-gradient(to bottom,#808080 0 1px,transparent 1px 2px);background-size:1px 2px"></div>
<div style="left:790px;top:395px;width:1px;height:78px;background:linear-gradient(to bottom,#808080 0 1px,transparent 1px 2px);background-size:1px 2px"></div>
<div style="left:831px;top:395px;width:1px;height:78px;background:linear-gradient(to bottom,#808080 0 1px,transparent 1px 2px);background-size:1px 2px"></div>
<div style="left:871px;top:395px;width:1px;height:78px;background:linear-gradient(to bottom,#808080 0 1px,transparent 1px 2px);background-size:1px 2px"></div>
<div style="left:912px;top:395px;width:1px;height:78px;background:linear-gradient(to bottom,#808080 0 1px,transparent 1px 2px);background-size:1px 2px"></div>
<div style="left:952px;top:395px;width:1px;height:78px;background:linear-gradient(to bottom,#808080 0 1px,transparent 1px 2px);background-size:1px 2px"></div>
<div style="left:993px;top:395px;width:1px;height:78px;background:linear-gradient(to bottom,#808080 0 1px,transparent 1px 2px);background-size:1px 2px"></div>
<div style="left:1033px;top:395px;width:1px;height:78px;background:linear-gradient(to bottom,#808080 0 1px,transparent 1px 2px);background-size:1px 2px"></div>
<div style="left:1073px;top:395px;width:1px;height:78px;background:linear-gradient(to bottom,#808080 0 1px,transparent 1px 2px);background-size:1px 2px"></div>
<div class="t" style="left:82px;width:300px;text-align:right;top:398px;color:#000;">2.5</div>
<div class="t" style="left:82px;width:300px;text-align:right;top:427px;color:#000;">1.5</div>
<div class="t" style="left:82px;width:300px;text-align:right;top:455px;color:#000;">0.5</div>
<div style="left:346px;top:394px;width:728px;height:1px;background:#000;"></div>
<div style="left:346px;top:473px;width:728px;height:1px;background:#000;"></div>
<div style="left:346px;top:489px;width:728px;height:1px;background:#000;"></div>
<div style="left:346px;top:394px;width:1px;height:96px;background:#000;"></div>
<div style="left:386px;top:394px;width:1px;height:96px;background:#000;"></div>
<div style="left:426px;top:474px;width:1px;height:15px;background:linear-gradient(to bottom,#000 0 1px,transparent 1px 2px);background-size:1px 2px"></div>
<div style="left:467px;top:474px;width:1px;height:15px;background:linear-gradient(to bottom,#000 0 1px,transparent 1px 2px);background-size:1px 2px"></div>
<div style="left:507px;top:474px;width:1px;height:15px;background:linear-gradient(to bottom,#000 0 1px,transparent 1px 2px);background-size:1px 2px"></div>
<div style="left:548px;top:474px;width:1px;height:15px;background:linear-gradient(to bottom,#000 0 1px,transparent 1px 2px);background-size:1px 2px"></div>
<div style="left:588px;top:474px;width:1px;height:15px;background:linear-gradient(to bottom,#000 0 1px,transparent 1px 2px);background-size:1px 2px"></div>
<div style="left:629px;top:474px;width:1px;height:15px;background:linear-gradient(to bottom,#000 0 1px,transparent 1px 2px);background-size:1px 2px"></div>
<div style="left:669px;top:474px;width:1px;height:15px;background:linear-gradient(to bottom,#000 0 1px,transparent 1px 2px);background-size:1px 2px"></div>
<div style="left:709px;top:474px;width:1px;height:15px;background:linear-gradient(to bottom,#000 0 1px,transparent 1px 2px);background-size:1px 2px"></div>
<div style="left:750px;top:474px;width:1px;height:15px;background:linear-gradient(to bottom,#000 0 1px,transparent 1px 2px);background-size:1px 2px"></div>
<div style="left:790px;top:474px;width:1px;height:15px;background:linear-gradient(to bottom,#000 0 1px,transparent 1px 2px);background-size:1px 2px"></div>
<div style="left:831px;top:474px;width:1px;height:15px;background:linear-gradient(to bottom,#000 0 1px,transparent 1px 2px);background-size:1px 2px"></div>
<div style="left:871px;top:474px;width:1px;height:15px;background:linear-gradient(to bottom,#000 0 1px,transparent 1px 2px);background-size:1px 2px"></div>
<div style="left:912px;top:474px;width:1px;height:15px;background:linear-gradient(to bottom,#000 0 1px,transparent 1px 2px);background-size:1px 2px"></div>
<div style="left:952px;top:474px;width:1px;height:15px;background:linear-gradient(to bottom,#000 0 1px,transparent 1px 2px);background-size:1px 2px"></div>
<div style="left:993px;top:474px;width:1px;height:15px;background:linear-gradient(to bottom,#000 0 1px,transparent 1px 2px);background-size:1px 2px"></div>
<div style="left:1033px;top:474px;width:1px;height:15px;background:linear-gradient(to bottom,#000 0 1px,transparent 1px 2px);background-size:1px 2px"></div>
<div style="left:1073px;top:474px;width:1px;height:15px;background:linear-gradient(to bottom,#000 0 1px,transparent 1px 2px);background-size:1px 2px"></div>
<div class="t" style="left:351px;top:475px;color:#000;">metres</div>
<div class="t" style="left:166px;width:300px;text-align:right;top:476px;color:#000;">2.20</div>
<div class="t" style="left:206px;width:300px;text-align:right;top:476px;color:#000;">2.20</div>
<div class="t" style="left:247px;width:300px;text-align:right;top:476px;color:#000;">2.20</div>
<div class="t" style="left:287px;width:300px;text-align:right;top:476px;color:#000;">2.20</div>
<div class="t" style="left:328px;width:300px;text-align:right;top:476px;color:#000;">2.20</div>
<div class="t" style="left:368px;width:300px;text-align:right;top:476px;color:#000;">2.20</div>
<div class="t" style="left:408px;width:300px;text-align:right;top:476px;color:#ff0000;font-weight:bold;">2.20</div>
<div class="t" style="left:449px;width:300px;text-align:right;top:476px;color:#ff0000;font-weight:bold;">2.20</div>
<div class="t" style="left:489px;width:300px;text-align:right;top:476px;color:#ff0000;font-weight:bold;">1.20</div>
<div class="t" style="left:530px;width:300px;text-align:right;top:476px;color:#ff0000;font-weight:bold;">1.20</div>
<div class="t" style="left:570px;width:300px;text-align:right;top:476px;color:#000;">0.00</div>
<div class="t" style="left:611px;width:300px;text-align:right;top:476px;color:#000;">0.00</div>
<div class="t" style="left:651px;width:300px;text-align:right;top:476px;color:#000;">0.00</div>
<div class="t" style="left:692px;width:300px;text-align:right;top:476px;color:#000;">0.00</div>
<div class="t" style="left:732px;width:300px;text-align:right;top:476px;color:#000;">0.00</div>
<div class="t" style="left:772px;width:300px;text-align:right;top:476px;color:#000;">0.00</div>
<div style="left:425px;top:496px;width:246px;height:3px;background:#ff0000;"></div>
<div style="left:425px;top:496px;width:3px;height:72px;background:#ff0000;"></div>
<div style="left:668px;top:544px;width:165px;height:3px;background:#ff0000;"></div>
<div style="left:668px;top:496px;width:3px;height:51px;background:#ff0000;"></div>
<div style="left:830px;top:520px;width:43px;height:3px;background:#ff0000;"></div>
<div style="left:830px;top:520px;width:3px;height:27px;background:#ff0000;"></div>
<div style="left:870px;top:544px;width:84px;height:3px;background:#ff0000;"></div>
<div style="left:870px;top:520px;width:3px;height:27px;background:#ff0000;"></div>
<div style="left:951px;top:520px;width:123px;height:3px;background:#ff0000;"></div>
<div style="left:951px;top:520px;width:3px;height:27px;background:#ff0000;"></div>
<div style="left:387px;top:497px;width:687px;height:1px;background:linear-gradient(to right,transparent 0 1px,#808080 1px 2px);background-size:2px 1px"></div>
<div style="left:384px;top:497px;width:2px;height:1px;background:#000;"></div>
<div style="left:387px;top:509px;width:687px;height:1px;background:linear-gradient(to right,transparent 0 1px,#808080 1px 2px);background-size:2px 1px"></div>
<div style="left:384px;top:509px;width:2px;height:1px;background:#000;"></div>
<div style="left:387px;top:521px;width:687px;height:1px;background:linear-gradient(to right,transparent 0 1px,#808080 1px 2px);background-size:2px 1px"></div>
<div style="left:384px;top:521px;width:2px;height:1px;background:#000;"></div>
<div style="left:387px;top:533px;width:687px;height:1px;background:linear-gradient(to right,transparent 0 1px,#808080 1px 2px);background-size:2px 1px"></div>
<div style="left:384px;top:533px;width:2px;height:1px;background:#000;"></div>
<div style="left:387px;top:545px;width:687px;height:1px;background:linear-gradient(to right,transparent 0 1px,#808080 1px 2px);background-size:2px 1px"></div>
<div style="left:384px;top:545px;width:2px;height:1px;background:#000;"></div>
<div style="left:387px;top:557px;width:687px;height:1px;background:linear-gradient(to right,transparent 0 1px,#808080 1px 2px);background-size:2px 1px"></div>
<div style="left:384px;top:557px;width:2px;height:1px;background:#000;"></div>
<div style="left:426px;top:490px;width:1px;height:78px;background:linear-gradient(to bottom,transparent 0 1px,#808080 1px 2px);background-size:1px 2px"></div>
<div style="left:467px;top:490px;width:1px;height:78px;background:linear-gradient(to bottom,transparent 0 1px,#808080 1px 2px);background-size:1px 2px"></div>
<div style="left:507px;top:490px;width:1px;height:78px;background:linear-gradient(to bottom,transparent 0 1px,#808080 1px 2px);background-size:1px 2px"></div>
<div style="left:548px;top:490px;width:1px;height:78px;background:linear-gradient(to bottom,transparent 0 1px,#808080 1px 2px);background-size:1px 2px"></div>
<div style="left:588px;top:490px;width:1px;height:78px;background:linear-gradient(to bottom,transparent 0 1px,#808080 1px 2px);background-size:1px 2px"></div>
<div style="left:629px;top:490px;width:1px;height:78px;background:linear-gradient(to bottom,transparent 0 1px,#808080 1px 2px);background-size:1px 2px"></div>
<div style="left:669px;top:490px;width:1px;height:78px;background:linear-gradient(to bottom,transparent 0 1px,#808080 1px 2px);background-size:1px 2px"></div>
<div style="left:709px;top:490px;width:1px;height:78px;background:linear-gradient(to bottom,transparent 0 1px,#808080 1px 2px);background-size:1px 2px"></div>
<div style="left:750px;top:490px;width:1px;height:78px;background:linear-gradient(to bottom,transparent 0 1px,#808080 1px 2px);background-size:1px 2px"></div>
<div style="left:790px;top:490px;width:1px;height:78px;background:linear-gradient(to bottom,transparent 0 1px,#808080 1px 2px);background-size:1px 2px"></div>
<div style="left:831px;top:490px;width:1px;height:78px;background:linear-gradient(to bottom,transparent 0 1px,#808080 1px 2px);background-size:1px 2px"></div>
<div style="left:871px;top:490px;width:1px;height:78px;background:linear-gradient(to bottom,transparent 0 1px,#808080 1px 2px);background-size:1px 2px"></div>
<div style="left:912px;top:490px;width:1px;height:78px;background:linear-gradient(to bottom,transparent 0 1px,#808080 1px 2px);background-size:1px 2px"></div>
<div style="left:952px;top:490px;width:1px;height:78px;background:linear-gradient(to bottom,transparent 0 1px,#808080 1px 2px);background-size:1px 2px"></div>
<div style="left:993px;top:490px;width:1px;height:78px;background:linear-gradient(to bottom,transparent 0 1px,#808080 1px 2px);background-size:1px 2px"></div>
<div style="left:1033px;top:490px;width:1px;height:78px;background:linear-gradient(to bottom,transparent 0 1px,#808080 1px 2px);background-size:1px 2px"></div>
<div style="left:1073px;top:490px;width:1px;height:78px;background:linear-gradient(to bottom,transparent 0 1px,#808080 1px 2px);background-size:1px 2px"></div>
<div class="t" style="left:82px;width:300px;text-align:right;top:493px;color:#000;">3</div>
<div class="t" style="left:82px;width:300px;text-align:right;top:517px;color:#000;">2</div>
<div class="t" style="left:82px;width:300px;text-align:right;top:541px;color:#000;">1</div>
<div style="left:346px;top:489px;width:728px;height:1px;background:#000;"></div>
<div style="left:346px;top:568px;width:728px;height:1px;background:#000;"></div>
<div style="left:346px;top:584px;width:728px;height:1px;background:#000;"></div>
<div style="left:346px;top:489px;width:1px;height:96px;background:#000;"></div>
<div style="left:386px;top:489px;width:1px;height:96px;background:#000;"></div>
<div style="left:426px;top:569px;width:1px;height:15px;background:linear-gradient(to bottom,transparent 0 1px,#000 1px 2px);background-size:1px 2px"></div>
<div style="left:467px;top:569px;width:1px;height:15px;background:linear-gradient(to bottom,transparent 0 1px,#000 1px 2px);background-size:1px 2px"></div>
<div style="left:507px;top:569px;width:1px;height:15px;background:linear-gradient(to bottom,transparent 0 1px,#000 1px 2px);background-size:1px 2px"></div>
<div style="left:548px;top:569px;width:1px;height:15px;background:linear-gradient(to bottom,transparent 0 1px,#000 1px 2px);background-size:1px 2px"></div>
<div style="left:588px;top:569px;width:1px;height:15px;background:linear-gradient(to bottom,transparent 0 1px,#000 1px 2px);background-size:1px 2px"></div>
<div style="left:629px;top:569px;width:1px;height:15px;background:linear-gradient(to bottom,transparent 0 1px,#000 1px 2px);background-size:1px 2px"></div>
<div style="left:669px;top:569px;width:1px;height:15px;background:linear-gradient(to bottom,transparent 0 1px,#000 1px 2px);background-size:1px 2px"></div>
<div style="left:709px;top:569px;width:1px;height:15px;background:linear-gradient(to bottom,transparent 0 1px,#000 1px 2px);background-size:1px 2px"></div>
<div style="left:750px;top:569px;width:1px;height:15px;background:linear-gradient(to bottom,transparent 0 1px,#000 1px 2px);background-size:1px 2px"></div>
<div style="left:790px;top:569px;width:1px;height:15px;background:linear-gradient(to bottom,transparent 0 1px,#000 1px 2px);background-size:1px 2px"></div>
<div style="left:831px;top:569px;width:1px;height:15px;background:linear-gradient(to bottom,transparent 0 1px,#000 1px 2px);background-size:1px 2px"></div>
<div style="left:871px;top:569px;width:1px;height:15px;background:linear-gradient(to bottom,transparent 0 1px,#000 1px 2px);background-size:1px 2px"></div>
<div style="left:912px;top:569px;width:1px;height:15px;background:linear-gradient(to bottom,transparent 0 1px,#000 1px 2px);background-size:1px 2px"></div>
<div style="left:952px;top:569px;width:1px;height:15px;background:linear-gradient(to bottom,transparent 0 1px,#000 1px 2px);background-size:1px 2px"></div>
<div style="left:993px;top:569px;width:1px;height:15px;background:linear-gradient(to bottom,transparent 0 1px,#000 1px 2px);background-size:1px 2px"></div>
<div style="left:1033px;top:569px;width:1px;height:15px;background:linear-gradient(to bottom,transparent 0 1px,#000 1px 2px);background-size:1px 2px"></div>
<div style="left:1073px;top:569px;width:1px;height:15px;background:linear-gradient(to bottom,transparent 0 1px,#000 1px 2px);background-size:1px 2px"></div>
<div class="t" style="left:351px;top:570px;color:#000;">metres</div>
<div class="t" style="left:166px;width:300px;text-align:right;top:571px;color:#000;">3.00</div>
<div class="t" style="left:206px;width:300px;text-align:right;top:571px;color:#000;">3.00</div>
<div class="t" style="left:247px;width:300px;text-align:right;top:571px;color:#000;">3.00</div>
<div class="t" style="left:287px;width:300px;text-align:right;top:571px;color:#000;">3.00</div>
<div class="t" style="left:328px;width:300px;text-align:right;top:571px;color:#000;">3.00</div>
<div class="t" style="left:368px;width:300px;text-align:right;top:571px;color:#000;">3.00</div>
<div class="t" style="left:408px;width:300px;text-align:right;top:571px;color:#000;">1.00</div>
<div class="t" style="left:449px;width:300px;text-align:right;top:571px;color:#000;">1.00</div>
<div class="t" style="left:489px;width:300px;text-align:right;top:571px;color:#000;">1.00</div>
<div class="t" style="left:530px;width:300px;text-align:right;top:571px;color:#000;">1.00</div>
<div class="t" style="left:570px;width:300px;text-align:right;top:571px;color:#000;">2.00</div>
<div class="t" style="left:611px;width:300px;text-align:right;top:571px;color:#000;">1.00</div>
<div class="t" style="left:651px;width:300px;text-align:right;top:571px;color:#000;">1.00</div>
<div class="t" style="left:692px;width:300px;text-align:right;top:571px;color:#000;">2.00</div>
<div class="t" style="left:732px;width:300px;text-align:right;top:571px;color:#000;">2.00</div>
<div class="t" style="left:772px;width:300px;text-align:right;top:571px;color:#000;">2.00</div>
</body></html>
